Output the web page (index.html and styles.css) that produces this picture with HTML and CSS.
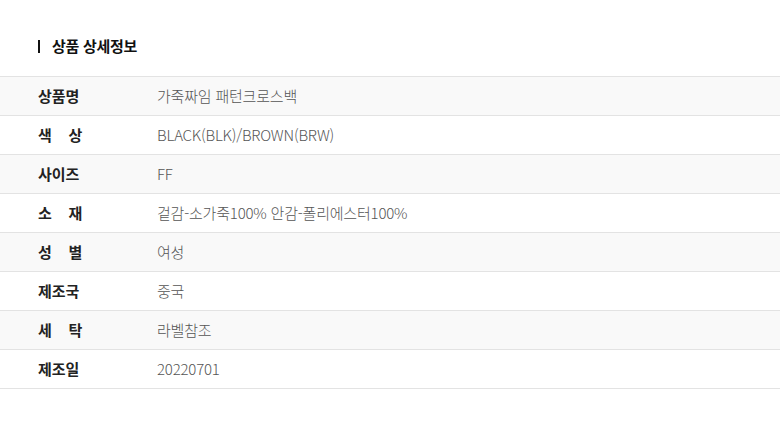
FILE: index.html
```html
<!DOCTYPE html>
<html lang="ko">
<head>
<meta charset="utf-8">
<link rel="stylesheet" href="styles.css">
</head>
<body>
<div class="page">
  <h2 class="title"><span class="bar"></span>상품 상세정보</h2>
  <div class="table">
    <div class="row alt"><div class="th">상품명</div><div class="td">가죽짜임 패턴크로스백</div></div>
    <div class="row"><div class="th">색&nbsp;&nbsp;&nbsp;&nbsp;상</div><div class="td">BLACK(BLK)/BROWN(BRW)</div></div>
    <div class="row alt"><div class="th">사이즈</div><div class="td">FF</div></div>
    <div class="row"><div class="th">소&nbsp;&nbsp;&nbsp;&nbsp;재</div><div class="td">겉감-소가죽100% 안감-폴리에스터100%</div></div>
    <div class="row alt"><div class="th">성&nbsp;&nbsp;&nbsp;&nbsp;별</div><div class="td">여성</div></div>
    <div class="row"><div class="th">제조국</div><div class="td">중국</div></div>
    <div class="row alt"><div class="th">세&nbsp;&nbsp;&nbsp;&nbsp;탁</div><div class="td">라벨참조</div></div>
    <div class="row"><div class="th">제조일</div><div class="td">20220701</div></div>
  </div>
</div>
</body>
</html>
```

FILE: styles.css
```css
* { box-sizing: border-box; }
html, body { margin: 0; padding: 0; background: #fff; }
body { font-family: "Noto Sans CJK KR", "Noto Sans", sans-serif; color: #222; }
.page { padding-top: 36px; }
.title {
  margin: 0 0 20px 38px;
  display: flex;
  align-items: center;
  font-size: 15px;
  font-weight: 700;
  line-height: 20px;
  color: #111;
  letter-spacing: -0.3px;
}
.bar { width: 2px; height: 13px; background: #111; margin-right: 12px; }
.table { border-top: 1px solid #e3e3e3; }
.row {
  display: flex;
  align-items: center;
  height: 39px;
  padding-bottom: 2px;
  border-bottom: 1px solid #e3e3e3;
}
.row.alt { background: #f9f9f9; }
.th {
  width: 157px;
  padding-left: 38px;
  font-size: 15px;
  font-weight: 700;
  color: #222;
  white-space: pre;
}
.td {
  font-size: 15px;
  font-weight: 300;
  color: #555;
  letter-spacing: -0.2px;
}
```
